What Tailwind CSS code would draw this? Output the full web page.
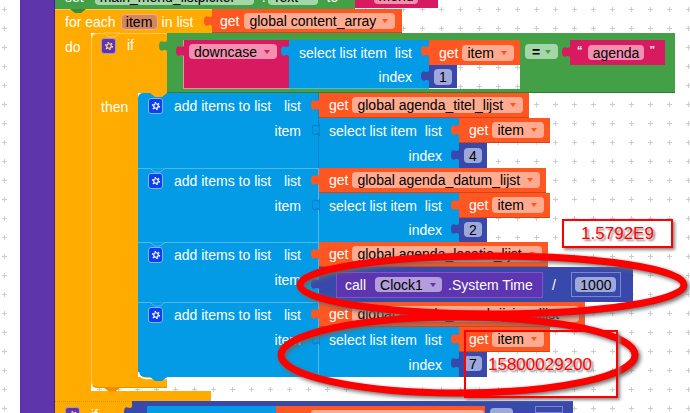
<!DOCTYPE html>
<html lang="en">
<head>
    <meta charset="UTF-8">
    <title>Blocks</title>
    <script src="https://cdn.jsdelivr.net/npm/@tailwindcss/browser@4"></script>
</head>
<body class="relative w-[690px] h-[413px] overflow-hidden bg-white text-[14px] leading-none text-white whitespace-nowrap font-['Liberation_Sans',sans-serif]">
    <svg class="hidden">
        <symbol id="tab" viewBox="0 0 8 12"><path d="M8 0C8 2 6 2.500 3.500 1.500C1 .500 0 3 0 6C0 9 1 11.500 3.500 10.500C6 9.500 8 10 8 12Z"/></symbol>
        <symbol id="gear" viewBox="0 0 16 16"><circle cx="8" cy="8" r="3" fill="none" stroke="currentColor" stroke-width="1.600"/><circle cx="8" cy="8" r="4.600" fill="none" stroke="currentColor" stroke-width="1.800" stroke-dasharray="2 2.800"/></symbol>
    </svg>

    <!-- workspace grid -->
    <svg class="absolute inset-0" width="690" height="413">
        <defs><pattern id="dots" width="19" height="19" patternUnits="userSpaceOnUse"><path d="M2 9.500H7M4.500 7V12" stroke="#ccc" fill="none"/></pattern></defs>
        <rect width="690" height="413" fill="url(#dots)"/>
    </svg>

    <!-- purple outer block -->
    <div class="absolute left-[20px] top-0 w-[35px] h-[413px] bg-[#5e35ab] border-r border-[#3f1f9e]"></div>

    <!-- set main_menu_listpicker . Text to -->
    <div class="absolute left-[55px] top-[-16px] flex h-[25px] w-[300px] items-center bg-[#43a047] pl-[10px]">
        <span>set</span>
        <span class="ml-[11px] flex h-4 w-[159px] items-center rounded-[4px] bg-[#a5d6a7] pl-[5px] text-black">main_menu_listpicker</span>
        <span class="ml-[8px]">.</span>
        <span class="ml-[2px] flex h-4 w-[50px] items-center rounded-[4px] bg-[#a5d6a7] pl-[5px] text-black">Text</span>
        <span class="ml-[9px]">to</span>
    </div>
    <div class="absolute left-[355px] top-[-16px] flex h-[24px] w-[83px] items-center bg-[#d81b60] pl-[19px]">
        <span class="flex h-4 w-[44px] items-center justify-center rounded-[4px] bg-[#f48fb1] text-black">menu</span>
    </div>

    <!-- for each -->
    <div class="absolute left-[55px] top-[9px] flex w-[635px] flex-col">
        <div class="flex h-[24px]">
            <div class="flex w-[157px] items-center border-t border-[#ffc85a] bg-[#ffab00] pl-[10px]">
                <span>for each</span>
                <span class="ml-[5px] flex h-4 w-[37px] items-center justify-center rounded-[4px] border border-[#eeb08a] bg-[#d4875f] text-black">item</span>
                <span class="ml-[4px]">in list</span>
            </div>
            <div class="relative flex w-[190px] items-center border-b border-[#d84315] bg-[#ff5722] pl-[8px] pr-[7px]">
                <svg class="absolute left-[-8px] top-[6px] h-3 w-2 fill-[#ff5722]"><use href="#tab"/></svg>
                <span>get</span>
                <span class="ml-[5px] flex h-4 flex-1 items-center justify-between rounded-[4px] bg-[#ffab91] pl-[5px] pr-[7px] text-black">global content_array<i class="border-x-[3px] border-t-[4px] border-x-transparent border-t-[#ff5722]"></i></span>
            </div>
        </div>

        <div class="flex h-[358px]">
            <div class="w-[36px] bg-[#ffab00] pl-[10px] pt-[6px]"><span class="block h-4 leading-4">do</span></div>

            <!-- if -->
            <div class="flex flex-col">
                <div class="flex h-[60px]">
                    <div class="relative flex w-[76px] items-start rounded-tl-[6px] border-l border-t border-[#ffc85a] bg-[#ffab00] pl-[9px] pt-[4px]">
                        <span class="flex h-4 w-[15px] items-center justify-center rounded-[3px] border border-[#a993d8] bg-[#5e35ab] text-[#ffe082]"><svg class="h-3 w-3 fill-none"><use href="#gear"/></svg></span>
                        <span class="ml-[11px] -mt-px h-4 leading-4">if</span>
                    </div>
                    <div class="relative h-[60px] w-[508px] border-b border-[#2e7d32] bg-[#43a047] pl-[16px] pt-[7px]">
                        <svg class="absolute left-[-8px] top-[7px] h-3 w-2 fill-[#43a047]"><use href="#tab"/></svg>
                        <div class="flex">
                            <div class="relative h-[49px] w-[106px] border-b border-l border-white/50 bg-[#d81b60] pl-[5px] pt-[4px]">
                                <svg class="absolute left-[-8px] top-[5px] h-3 w-2 fill-[#d81b60]"><use href="#tab"/></svg>
                                <span class="flex h-[15px] w-[88px] items-center justify-between rounded-[4px] bg-[#f48fb1] pl-[5px] pr-[7px] text-black">downcase<i class="border-x-[3px] border-t-[4px] border-x-transparent border-t-[#d81b60]"></i></span>
                            </div>
                            <div class="relative h-[49px] w-[140px] border-b border-white/30 bg-[#039be5] pl-[10px]">
                                <svg class="absolute left-[-8px] top-[5px] h-3 w-2 fill-[#039be5]"><use href="#tab"/></svg>
                                <div class="flex h-[25px] items-center whitespace-pre">select list item  list</div>
                                <div class="flex h-[24px] items-center justify-end pr-[17px]">index</div>
                            </div>
                            <div class="flex w-[91px] flex-col">
                                <div class="relative flex h-[25px] items-center bg-[#ff5722] pl-[10px] pr-[6px]">
                                    <svg class="absolute left-[-8px] top-[5px] h-3 w-2 fill-[#ff5722]"><use href="#tab"/></svg>
                                    <span>get</span>
                                    <span class="ml-[4px] flex h-4 flex-1 items-center justify-between rounded-[4px] bg-[#ffab91] pl-[5px] pr-[7px] text-black">item<i class="border-x-[3px] border-t-[4px] border-x-transparent border-t-[#ff5722]"></i></span>
                                </div>
                                <div class="flex h-[24px] border-b border-white/60 bg-white">
                                    <div class="relative w-[28px] bg-[#3949ab] pl-[5px] pt-[4px]">
                                        <svg class="absolute left-[-8px] top-[5px] h-3 w-2 fill-[#3949ab]"><use href="#tab"/></svg>
                                        <span class="flex h-4 w-[18px] items-center justify-center rounded-[4px] bg-[#9fa8da] text-black">1</span>
                                    </div>
                                    <svg class="h-[24px] w-[63px]"><g transform="translate(-457 -64)"><rect x="457" y="64" width="63" height="24" fill="url(#dots)"/></g></svg>
                                </div>
                            </div>
                            <div class="ml-[5px] mt-[4px] flex h-[15px] w-[33px] items-center justify-between rounded-[4px] bg-[#a5d6a7] pl-[7px] pr-[7px] font-bold text-black">=<i class="border-x-[3px] border-t-[4px] border-x-transparent border-t-[#43a047]"></i></div>
                            <div class="relative ml-[12px] flex h-[25px] w-[95px] items-center justify-between bg-[#d81b60] pl-[7px] pr-[10px]">
                                <svg class="absolute left-[-8px] top-[6px] h-3 w-2 fill-[#d81b60]"><use href="#tab"/></svg>
                                <span class="mb-[5px] text-[11px] font-bold">“</span>
                                <span class="flex h-[15px] w-[56px] items-center justify-center rounded-[4px] bg-[#f48fb1] text-black">agenda</span>
                                <span class="mb-[5px] text-[11px] font-bold">”</span>
                            </div>
                        </div>
                    </div>
                </div>

                <div class="flex h-[284px]">
                    <div class="w-[47px] border-l border-[#ffc85a] bg-[#ffab00] pl-[9px] pt-[6px]"><span class="block h-4 leading-4">then</span></div>

                    <!-- statements -->
                    <div class="flex flex-col">
                        <div class="flex h-[75px]">
                            <div class="relative w-[181px] rounded-tl-[5px] border-r border-[#0288d1] bg-[#039be5]">
                                <div class="flex h-[25px] items-center pl-[10px] pr-[17px]">
                                    <span class="flex h-4 w-[15px] items-center justify-center rounded-[3px] border border-[#81b4f0] bg-[#0b3ff0]"><svg class="h-3 w-3"><use href="#gear"/></svg></span>
                                    <span class="ml-[11px]">add items to list</span>
                                    <span class="ml-auto">list</span>
                                </div>
                                <div class="flex h-[25px] items-center justify-end pr-[17px]">item</div>
                            </div>
                            <div class="flex flex-col">
                                <div class="relative flex h-[25px] w-[210px] items-center border-b border-[#d84315] bg-[#ff5722] pl-[10px] pr-[6px]">
                                    <svg class="absolute left-[-8px] top-[6px] h-3 w-2 fill-[#ff5722]"><use href="#tab"/></svg>
                                    <span>get</span>
                                    <span class="ml-[4px] flex h-4 flex-1 items-center justify-between rounded-[4px] bg-[#ffab91] pl-[5px] pr-[7px] text-black">global agenda_titel_lijst<i class="border-x-[3px] border-t-[4px] border-x-transparent border-t-[#ff5722]"></i></span>
                                </div>
                                <div class="flex h-[50px]">
                                    <div class="relative w-[140px] bg-[#039be5] pl-[10px]">
                                        <svg class="absolute left-[-7px] top-[6px] h-3 w-2 fill-[#039be5] stroke-[#0277bd]"><use href="#tab"/></svg>
                                        <div class="flex h-[25px] items-center whitespace-pre">select list item  list</div>
                                        <div class="flex h-[25px] items-center justify-end pr-[17px]">index</div>
                                    </div>
                                    <div class="flex flex-col">
                                        <div class="relative flex h-[25px] w-[91px] items-center border-b border-[#d84315] bg-[#ff5722] pl-[10px] pr-[6px]">
                                            <svg class="absolute left-[-8px] top-[6px] h-3 w-2 fill-[#ff5722]"><use href="#tab"/></svg>
                                            <span>get</span>
                                            <span class="ml-[4px] flex h-4 flex-1 items-center justify-between rounded-[4px] bg-[#ffab91] pl-[5px] pr-[7px] text-black">item<i class="border-x-[3px] border-t-[4px] border-x-transparent border-t-[#ff5722]"></i></span>
                                        </div>
                                        <div class="relative h-[25px] w-[28px] bg-[#3949ab] pl-[5px] pt-[5px]">
                                            <svg class="absolute left-[-8px] top-[6px] h-3 w-2 fill-[#3949ab]"><use href="#tab"/></svg>
                                            <span class="flex h-[15px] w-[18px] items-center justify-center rounded-[4px] bg-[#9fa8da] text-black">4</span>
                                        </div>
                                    </div>
                                </div>
                            </div>
                        </div>

                        <div class="flex h-[74px]">
                            <div class="relative w-[181px] border-r border-t border-[#4fb8ec] bg-[#039be5]">
                                <div class="flex h-[24px] items-center pl-[10px] pr-[17px]">
                                    <span class="flex h-4 w-[15px] items-center justify-center rounded-[3px] border border-[#81b4f0] bg-[#0b3ff0]"><svg class="h-3 w-3"><use href="#gear"/></svg></span>
                                    <span class="ml-[11px]">add items to list</span>
                                    <span class="ml-auto">list</span>
                                </div>
                                <div class="flex h-[25px] items-center justify-end pr-[17px]">item</div>
                            </div>
                            <div class="flex flex-col">
                                <div class="relative flex h-[25px] w-[227px] items-center border-b border-[#d84315] bg-[#ff5722] pl-[10px] pr-[6px]">
                                    <svg class="absolute left-[-8px] top-[6px] h-3 w-2 fill-[#ff5722]"><use href="#tab"/></svg>
                                    <span>get</span>
                                    <span class="ml-[4px] flex h-4 flex-1 items-center justify-between rounded-[4px] bg-[#ffab91] pl-[5px] pr-[7px] text-black">global agenda_datum_lijst<i class="border-x-[3px] border-t-[4px] border-x-transparent border-t-[#ff5722]"></i></span>
                                </div>
                                <div class="flex h-[49px]">
                                    <div class="relative w-[140px] bg-[#039be5] pl-[10px]">
                                        <svg class="absolute left-[-7px] top-[6px] h-3 w-2 fill-[#039be5] stroke-[#0277bd]"><use href="#tab"/></svg>
                                        <div class="flex h-[25px] items-center whitespace-pre">select list item  list</div>
                                        <div class="flex h-[24px] items-center justify-end pr-[17px]">index</div>
                                    </div>
                                    <div class="flex flex-col">
                                        <div class="relative flex h-[25px] w-[91px] items-center border-b border-[#d84315] bg-[#ff5722] pl-[10px] pr-[6px]">
                                            <svg class="absolute left-[-8px] top-[6px] h-3 w-2 fill-[#ff5722]"><use href="#tab"/></svg>
                                            <span>get</span>
                                            <span class="ml-[4px] flex h-4 flex-1 items-center justify-between rounded-[4px] bg-[#ffab91] pl-[5px] pr-[7px] text-black">item<i class="border-x-[3px] border-t-[4px] border-x-transparent border-t-[#ff5722]"></i></span>
                                        </div>
                                        <div class="relative h-[24px] w-[28px] bg-[#3949ab] pl-[5px] pt-[4px]">
                                            <svg class="absolute left-[-8px] top-[5px] h-3 w-2 fill-[#3949ab]"><use href="#tab"/></svg>
                                            <span class="flex h-[15px] w-[18px] items-center justify-center rounded-[4px] bg-[#9fa8da] text-black">2</span>
                                        </div>
                                    </div>
                                </div>
                            </div>
                        </div>

                        <div class="flex h-[60px]">
                            <div class="relative w-[181px] border-r border-t border-[#4fb8ec] bg-[#039be5]">
                                <div class="flex h-[24px] items-center pl-[10px] pr-[17px]">
                                    <span class="flex h-4 w-[15px] items-center justify-center rounded-[3px] border border-[#81b4f0] bg-[#0b3ff0]"><svg class="h-3 w-3"><use href="#gear"/></svg></span>
                                    <span class="ml-[11px]">add items to list</span>
                                    <span class="ml-auto">list</span>
                                </div>
                                <div class="flex h-[25px] items-center justify-end pr-[17px]">item</div>
                            </div>
                            <div class="flex flex-col">
                                <div class="relative flex h-[25px] w-[229px] items-center border-b border-[#d84315] bg-[#ff5722] pl-[10px] pr-[6px]">
                                    <svg class="absolute left-[-8px] top-[6px] h-3 w-2 fill-[#ff5722]"><use href="#tab"/></svg>
                                    <span>get</span>
                                    <span class="ml-[4px] flex h-4 flex-1 items-center justify-between rounded-[4px] bg-[#ffab91] pl-[5px] pr-[7px] text-black">global agenda_locatie_lijst<i class="border-x-[3px] border-t-[4px] border-x-transparent border-t-[#ff5722]"></i></span>
                                </div>
                                <div class="relative flex h-[35px] w-[314px] items-center bg-[#3949ab] pl-[17px]">
                                    <svg class="absolute left-[-8px] top-[11px] h-3 w-2 fill-[#3949ab]"><use href="#tab"/></svg>
                                    <div class="flex h-[26px] w-[207px] items-center border border-[#7e57c2] bg-[#5e35b1] pl-[8px]">
                                        <span>call</span>
                                        <span class="ml-[9px] flex h-[15px] w-[67px] items-center justify-between rounded-[4px] bg-[#b39ddb] pl-[5px] pr-[6px] text-black">Clock1<i class="border-x-[3px] border-t-[4px] border-x-transparent border-t-[#5e35b1]"></i></span>
                                        <span class="ml-[6px]">.System Time</span>
                                    </div>
                                    <span class="ml-[9px]">/</span>
                                    <div class="relative ml-[15px] flex h-[25px] w-[50px] items-center justify-center border border-[#7986cb]">
                                        <span class="flex h-[15px] w-[41px] items-center justify-center rounded-[4px] bg-[#9fa8da] text-black">1000</span>
                                    </div>
                                </div>
                            </div>
                        </div>

                        <div class="flex h-[75px]">
                            <div class="relative w-[181px] rounded-bl-[6px] border-r border-t border-[#4fb8ec] bg-[#039be5]">
                                <div class="flex h-[24px] items-center pl-[10px] pr-[17px]">
                                    <span class="flex h-4 w-[15px] items-center justify-center rounded-[3px] border border-[#81b4f0] bg-[#0b3ff0]"><svg class="h-3 w-3"><use href="#gear"/></svg></span>
                                    <span class="ml-[11px]">add items to list</span>
                                    <span class="ml-auto">list</span>
                                </div>
                                <div class="flex h-[25px] items-center justify-end pr-[17px]">item</div>
                            </div>
                            <div class="flex flex-col">
                                <div class="relative flex h-[25px] w-[266px] items-center border-b border-[#d84315] bg-[#ff5722] pl-[10px] pr-[6px]">
                                    <svg class="absolute left-[-8px] top-[6px] h-3 w-2 fill-[#ff5722]"><use href="#tab"/></svg>
                                    <span>get</span>
                                    <span class="ml-[4px] flex h-4 flex-1 items-center justify-between rounded-[4px] bg-[#ffab91] pl-[5px] pr-[7px] text-black">global agenda_omschrijving_lijst<i class="border-x-[3px] border-t-[4px] border-x-transparent border-t-[#ff5722]"></i></span>
                                </div>
                                <div class="flex h-[50px]">
                                    <div class="relative w-[140px] bg-[#039be5] pl-[10px]">
                                        <svg class="absolute left-[-7px] top-[6px] h-3 w-2 fill-[#039be5] stroke-[#0277bd]"><use href="#tab"/></svg>
                                        <div class="flex h-[25px] items-center whitespace-pre">select list item  list</div>
                                        <div class="flex h-[25px] items-center justify-end pr-[17px]">index</div>
                                    </div>
                                    <div class="flex flex-col">
                                        <div class="relative flex h-[25px] w-[91px] items-center border-b border-[#d84315] bg-[#ff5722] pl-[10px] pr-[6px]">
                                            <svg class="absolute left-[-8px] top-[6px] h-3 w-2 fill-[#ff5722]"><use href="#tab"/></svg>
                                            <span>get</span>
                                            <span class="ml-[4px] flex h-4 flex-1 items-center justify-between rounded-[4px] bg-[#ffab91] pl-[5px] pr-[7px] text-black">item<i class="border-x-[3px] border-t-[4px] border-x-transparent border-t-[#ff5722]"></i></span>
                                        </div>
                                        <div class="relative h-[25px] w-[28px] bg-[#3949ab] pl-[5px] pt-[4px]">
                                            <svg class="absolute left-[-8px] top-[5px] h-3 w-2 fill-[#3949ab]"><use href="#tab"/></svg>
                                            <span class="flex h-[15px] w-[18px] items-center justify-center rounded-[4px] bg-[#9fa8da] text-black">7</span>
                                        </div>
                                    </div>
                                </div>
                            </div>
                        </div>
                    </div>
                </div>

                <!-- if bottom bar -->
                <div class="h-[11px] w-[76px] rounded-bl-[6px] border-b border-l border-[#ef8f00] border-l-[#ffc85a] bg-[#ffab00]"></div>
            </div>
        </div>

        <!-- for each bottom bar -->
        <div class="h-[10px] w-[156px] bg-[#ffab00]"></div>

        <!-- next if, cut off by the window -->
        <div class="flex h-[12px]">
            <div class="flex w-[77px] items-start border-t border-dotted border-[#d89000] bg-[#ffab00] pl-[10px] pt-[5px]">
                <span class="flex h-4 w-[15px] items-center justify-center rounded-[3px] border border-[#a993d8] bg-[#5e35ab] text-[#ffe082]"><svg class="h-3 w-3 fill-none"><use href="#gear"/></svg></span>
                <span class="ml-[11px] h-4 leading-4">if</span>
            </div>
            <div class="relative flex h-[12px] w-[441px] bg-[#3949ab] pl-[15px] pt-[5px]">
                <svg class="absolute left-[-8px] top-[5px] h-3 w-2 fill-[#3949ab]"><use href="#tab"/></svg>
                <div class="h-[7px] w-[129px] bg-[#039be5]"></div>
                <div class="flex h-[7px] w-[209px] justify-end bg-[#ff5722] pr-[1px] pt-[4px]"><span class="block h-[3px] w-[173px] rounded-t-[4px] bg-[#ffab91]"></span></div>
                <span class="ml-[5px] mt-[2px] block h-[5px] w-[23px] rounded-t-[4px] bg-[#9fa8da]"></span>
                <span class="ml-[22px] block h-[7px] w-[28px] border border-[#7986cb]"></span>
            </div>
        </div>
    </div>

    <!-- statement notches -->
    <svg class="absolute inset-0" width="690" height="413">
        <path d="M70 9H86L81 13H75Z" fill="#378a3c"/>
        <path d="M104 33L109 37H115L120 33Z" fill="#ffab00" stroke="#ffc85a"/>
        <path d="M150 93L155 97H162L167 93Z" fill="#ffab00"/>
        <path d="M150 168.500L155 172H160L165 168.500M150 242.500L155 246H160L165 242.500M150 302.500L155 306H160L165 302.500" fill="#039be5" stroke="#4fb8ec"/>
        <path d="M138.500 372Q139 378 146 378.500H167" fill="none" stroke="#fff" stroke-width="1.500"/>
        <path d="M150 377L155 381H162L167 377Z" fill="#039be5"/>
        <path d="M104 388L109 391.500H115L120 388Z" fill="#ef8f00"/>
    </svg>

    <!-- red annotations -->
    <svg class="absolute inset-0 drop-shadow-[2px_2px_2px_#666]" width="690" height="413" fill="none" stroke="#ff0000" stroke-width="7">
        <ellipse cx="492" cy="285" rx="192" ry="29"/>
        <ellipse cx="458" cy="355" rx="177" ry="38"/>
    </svg>
    <div class="absolute left-[562px] top-[219px] flex h-[29px] w-[111px] items-center justify-center border-2 border-[#f00] bg-white text-[17px] text-[#f00] shadow-[2px_2px_3px_#888] [text-shadow:2px_2px_2px_#888]">1.5792E9</div>
    <div class="absolute left-[464px] top-[330px] h-[68px] w-[154px] border-2 border-[#f00] shadow-[2px_2px_3px_#888]"></div>
    <span class="absolute left-[488px] top-[356px] text-[17px] text-[#f00] [text-shadow:2px_2px_2px_#888]">15800029200</span>
</body>
</html>
